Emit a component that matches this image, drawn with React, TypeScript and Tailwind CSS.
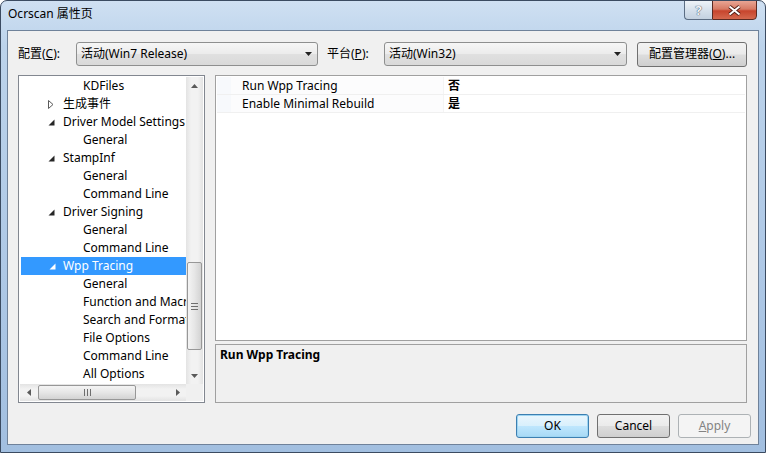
import React from "react";

type Node = { label: string; level: 1 | 2; arrow?: "open" | "closed"; selected?: boolean };

const tree: Node[] = [
  { label: "KDFiles", level: 2 },
  { label: "生成事件", level: 1, arrow: "closed" },
  { label: "Driver Model Settings", level: 1, arrow: "open" },
  { label: "General", level: 2 },
  { label: "StampInf", level: 1, arrow: "open" },
  { label: "General", level: 2 },
  { label: "Command Line", level: 2 },
  { label: "Driver Signing", level: 1, arrow: "open" },
  { label: "General", level: 2 },
  { label: "Command Line", level: 2 },
  { label: "Wpp Tracing", level: 1, arrow: "open", selected: true },
  { label: "General", level: 2 },
  { label: "Function and Macro Options", level: 2 },
  { label: "Search and Formatting", level: 2 },
  { label: "File Options", level: 2 },
  { label: "Command Line", level: 2 },
  { label: "All Options", level: 2 },
];

const props = [
  { name: "Run Wpp Tracing", value: "否" },
  { name: "Enable Minimal Rebuild", value: "是" },
];

function DownTri({ color = "#222" }: { color?: string }) {
  return (
    <svg width="7" height="4" viewBox="0 0 7 4">
      <path d="M0 0H7L3.5 4Z" fill={color} />
    </svg>
  );
}

function Arrow({ kind, selected }: { kind: "open" | "closed"; selected?: boolean }) {
  if (kind === "open")
    return (
      <svg width="7" height="7" viewBox="0 0 7 7">
        <path d="M6.5 0.5V6.5H0.5Z" fill={selected ? "#ffffff" : "#262626"} />
      </svg>
    );
  return (
    <svg width="6" height="9" viewBox="0 0 6 9">
      <path d="M0.5 0.5L5 4.5L0.5 8.5Z" fill="none" stroke="#5a5a5a" />
    </svg>
  );
}

function Combo({ text, w }: { text: string; w: string }) {
  return (
    <div
      className={`${w} h-[24px] flex items-center justify-between pl-[4px] pr-[5px] rounded-[3px] border border-[#8e8f8f] bg-[linear-gradient(180deg,#f6f6f6_0%,#ececec_48%,#e0e0e0_52%,#d9d9d9_100%)]`}
    >
      <span>{text}</span>
      <DownTri />
    </div>
  );
}

function VScroll() {
  return (
    <div className="w-[17px] flex flex-col bg-[linear-gradient(90deg,#e3e3e3,#f2f2f2_30%,#f2f2f2_70%,#e3e3e3)]">
      <div className="h-[17px] flex items-center justify-center">
        <svg width="7" height="4" viewBox="0 0 7 4">
          <path d="M0 4H7L3.5 0Z" fill="#5a5a5a" />
        </svg>
      </div>
      <div className="flex-1">
        <div className="mt-[168px] ml-[1px] w-[15px] h-[88px] rounded-[2px] border border-[#979797] bg-[linear-gradient(90deg,#f4f4f4,#e6e6e6_50%,#d3d3d3)] flex flex-col items-center justify-center gap-[2px]">
          <div className="w-[7px] h-[1px] bg-[#6e6e6e]" />
          <div className="w-[7px] h-[1px] bg-[#6e6e6e]" />
          <div className="w-[7px] h-[1px] bg-[#6e6e6e]" />
        </div>
      </div>
      <div className="h-[17px] flex items-center justify-center">
        <DownTri color="#5a5a5a" />
      </div>
    </div>
  );
}

function HScroll() {
  return (
    <div className="h-[17px] flex">
      <div className="w-[166px] flex bg-[linear-gradient(180deg,#e3e3e3,#f2f2f2_30%,#f2f2f2_70%,#e3e3e3)]">
        <div className="w-[17px] flex items-center justify-center">
          <svg width="4" height="7" viewBox="0 0 4 7">
            <path d="M4 0V7L0 3.5Z" fill="#5a5a5a" />
          </svg>
        </div>
        <div className="ml-[1px] mt-[1px] w-[98px] h-[15px] rounded-[2px] border border-[#979797] bg-[linear-gradient(180deg,#f4f4f4,#e6e6e6_50%,#d3d3d3)] flex items-center justify-center gap-[2px]">
          <div className="w-[1px] h-[7px] bg-[#6e6e6e]" />
          <div className="w-[1px] h-[7px] bg-[#6e6e6e]" />
          <div className="w-[1px] h-[7px] bg-[#6e6e6e]" />
        </div>
        <div className="flex-1" />
        <div className="w-[17px] flex items-center justify-center">
          <svg width="4" height="7" viewBox="0 0 4 7">
            <path d="M0 0V7L4 3.5Z" fill="#5a5a5a" />
          </svg>
        </div>
      </div>
      <div className="w-[17px] bg-[#f0f0f0]" />
    </div>
  );
}

function Btn({ children, kind }: { children: React.ReactNode; kind?: "default" | "disabled" }) {
  const look =
    kind === "default"
      ? "border-[#3c7fb1] bg-[linear-gradient(180deg,#eaf6fd_0%,#d9f0fc_48%,#bee6fd_52%,#a7d9f5_100%)] shadow-[inset_0_0_0_1px_#9fd5f2]"
      : kind === "disabled"
      ? "border-[#adb2b5] bg-[#f4f4f4] text-[#838383]"
      : "border-[#707070] bg-[linear-gradient(180deg,#f2f2f2_0%,#ebebeb_48%,#dddddd_52%,#cfcfcf_100%)]";
  return (
    <div className={`w-[73px] h-[24px] rounded-[3px] border flex items-center justify-center ${look}`}>
      {children}
    </div>
  );
}

export default function App() {
  return (
    <div className="w-[766px] h-[453px] flex flex-col rounded-t-[7px] border border-[#3b4b61] bg-[linear-gradient(180deg,#cfe0f2_0%,#bcd3eb_10%,#aec8e6_60%,#a2bfe0_100%)] text-[12px] leading-none text-black font-['Noto_Sans','Noto_Sans_CJK_SC',sans-serif] overflow-hidden">
      {/* title bar */}
      <div className="h-[29px] flex items-start justify-between shrink-0">
        <div className="pl-[7px] pt-[7px] text-[12px]">Ocrscan 属性页</div>
        <div className="flex mr-[8px] -mt-[1px]">
          <div className="w-[28px] h-[20px] rounded-bl-[4px] border border-[#5b6d83] border-r-0 bg-[linear-gradient(180deg,#eef3f8_0%,#d6e1ec_50%,#c3d1e0_100%)] flex items-center justify-center text-[13px] font-bold text-[#f4f6f9] [text-shadow:0_0_1px_#3a4a60,0_0_1px_#3a4a60]">
            ?
          </div>
          <div className="w-[45px] h-[20px] rounded-br-[4px] border border-[#5a2a22] bg-[linear-gradient(180deg,#e8a594_0%,#d67a64_45%,#c7452d_55%,#d4684e_100%)] flex items-center justify-center">
            <svg width="13" height="11" viewBox="0 0 13 11">
              <path d="M1.5 1.5L11.5 9.5M11.5 1.5L1.5 9.5" stroke="#4a1a12" strokeWidth="3.6" />
              <path d="M1.5 1.5L11.5 9.5M11.5 1.5L1.5 9.5" stroke="#ffffff" strokeWidth="2" />
            </svg>
          </div>
        </div>
      </div>

      {/* client area */}
      <div className="flex-1 mx-[6px] mb-[7px] border border-[#6f829a] bg-[#f0f0f0] flex flex-col pt-[11px] pl-[10px] pr-[6px] pb-[6px]">
        <div className="flex items-center h-[24px]">
          <div className="w-[58px]">
            配置(<span className="underline">C</span>):
          </div>
          <Combo text="活动(Win7 Release)" w="w-[242px]" />
          <div className="w-[66px] pl-[9px]">
            平台(<span className="underline">P</span>):
          </div>
          <Combo text="活动(Win32)" w="w-[243px]" />
          <div className="ml-[10px] w-[110px] h-[25px] rounded-[3px] border border-[#707070] bg-[linear-gradient(180deg,#f2f2f2_0%,#ebebeb_48%,#dddddd_52%,#cfcfcf_100%)] flex items-center justify-center">
            配置管理器(<span className="underline">O</span>)...
          </div>
        </div>

        <div className="mt-[9px] h-[328px] flex gap-[10px]">
          {/* tree */}
          <div className="w-[187px] border border-[#828790] bg-white p-[1px] flex flex-col">
            <div className="flex-1 flex min-h-0">
              <div className="w-[166px] overflow-hidden">
                {tree.map((n, i) => (
                  <div
                    key={i}
                    className={`h-[18px] flex items-center whitespace-nowrap ${
                      n.selected ? "bg-[#3399ff] text-white ml-[1px]" : ""
                    }`}
                  >
                    <div className={`${n.selected ? "w-[42px]" : "w-[43px]"} shrink-0 flex items-center pl-[28px]`}>
                      {n.arrow && <Arrow kind={n.arrow} selected={n.selected} />}
                    </div>
                    <span className={n.level === 2 ? "ml-[20px]" : ""}>{n.label}</span>
                  </div>
                ))}
              </div>
              <VScroll />
            </div>
            <HScroll />
          </div>

          {/* right side */}
          <div className="w-[532px] flex flex-col gap-[3px]">
            <div className="h-[266px] border border-[#a0a0a0] bg-white p-[1px]">
              {props.map((p) => (
                <div key={p.name} className="h-[18px] flex border-b border-[#f0f0f0]">
                  <div className="w-[14px] bg-[#f7f9fc]" />
                  <div className="w-[212px] flex items-center pl-[11px] bg-[#fcfcfd]">{p.name}</div>
                  <div className="flex-1 flex items-center pl-[4px] border-l border-[#f4f4f4] font-semibold">
                    {p.value}
                  </div>
                </div>
              ))}
            </div>
            <div className="flex-1 border border-[#a0a0a0] bg-[#f0f0f0] pl-[4px] pt-[4px] font-bold">
              Run Wpp Tracing
            </div>
          </div>
        </div>

        <div className="mt-[11px] flex justify-end gap-[8px] mr-[1px]">
          <Btn kind="default">OK</Btn>
          <Btn>Cancel</Btn>
          <Btn kind="disabled">
            <span>
              <span className="underline">A</span>pply
            </span>
          </Btn>
        </div>
      </div>
    </div>
  );
}
